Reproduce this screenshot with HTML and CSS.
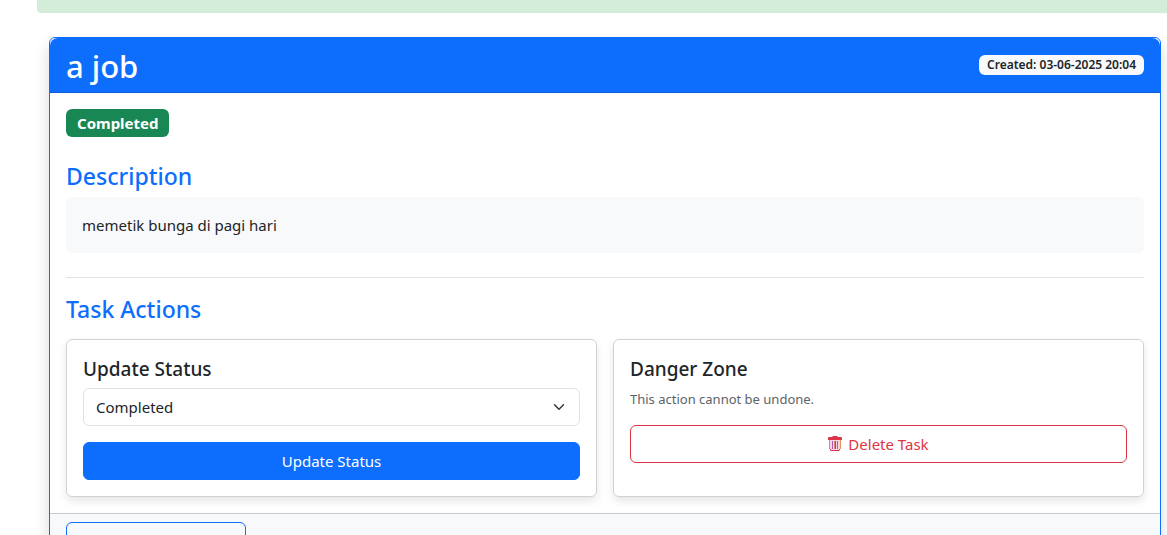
FILE: index.html
```html
<!DOCTYPE html>
<html lang="en">
<head>
<meta charset="utf-8">
<meta name="viewport" content="width=device-width, initial-scale=1">
<title>a job</title>
<link rel="stylesheet" href="styles.css">
</head>
<body>
<div class="alert"></div>
<main class="task">
  <header class="task-header">
    <h1 class="task-title">a job</h1>
    <span class="badge badge-created">Created: 03-06-2025 20:04</span>
  </header>
  <div class="task-body">
    <span class="badge badge-status">Completed</span>
    <h2 class="section-title">Description</h2>
    <p class="description">memetik bunga di pagi hari</p>
    <hr class="divider">
    <h2 class="section-title actions-title">Task Actions</h2>
    <div class="actions">
      <form class="panel">
        <h3 class="panel-title"><label for="status">Update Status</label></h3>
        <select class="select" id="status" name="status">
          <option selected>Completed</option>
        </select>
        <button class="btn btn-primary" type="button">Update Status</button>
      </form>
      <section class="panel">
        <h3 class="panel-title">Danger Zone</h3>
        <p class="note">This action cannot be undone.</p>
        <button class="btn btn-danger" type="button">
          <svg class="icon" viewBox="0 0 14 16" aria-hidden="true"><path fill="#dc3545" d="M5 0h4l1 1h3q1 0 1 1v2H0V2q0-1 1-1h3z"/><path fill="#f3d3ea" d="M2 4h10v10H2z"/><path fill="#e58a62" d="M1 4h1v9H1zM6 5h1v8H6z"/><path fill="#b45bb8" d="M4 5h1v8H4zM9 5h1v8H9z"/><path fill="#dc3545" d="M7 5h1v8H7z"/><path fill="#e8935c" d="M12 4h1v9h-1z"/><path fill="#dc3545" d="M2 13h1v1h8v-1h1v1l-1 1H3l-1-1z"/></svg>
          Delete Task
        </button>
      </section>
    </div>
  </div>
  <footer class="task-footer">
    <a class="btn btn-outline" href="#"></a>
  </footer>
</main>
</body>
</html>
```

FILE: styles.css
```css
* {
  box-sizing: border-box;
}

body {
  margin: 0;
  height: 100vh;
  overflow: hidden;
  background: #fff;
  color: #212529;
  font-family: "Segoe UI", "Noto Sans", "Open Sans", sans-serif;
  font-size: 15px;
  line-height: 24px;
}

h1, h2, h3, p {
  margin: 0;
  font-weight: 500;
}

.alert {
  height: 13px;
  margin-left: 37px;
  border-bottom-left-radius: 4px;
  background: #d4edda;
}

.task {
  margin: 24px 6px 24px 49px;
  border: 1px solid #0d6efd;
  border-radius: 6px;
  background: #fff;
  box-shadow: 0 8px 16px rgba(0, 0, 0, 0.15);
}

.task-header {
  display: flex;
  align-items: center;
  justify-content: space-between;
  padding: 8px 16px;
  border-bottom: 1px solid #0b5ed7;
  border-radius: 8px 8px 0 0;
  background: #0d6efd;
  color: #fff;
}

.task-title {
  padding-top: 2px;
  font-size: 31px;
  line-height: 36px;
}

.badge {
  display: block;
  border-radius: 6px;
  font-weight: 700;
}

.badge-created {
  padding: 0 8px;
  background: #f8f9fa;
  color: #212529;
  font-size: 12px;
  font-weight: 600;
  line-height: 20px;
}

.badge-status {
  width: fit-content;
  margin-bottom: 24px;
  padding: 0 11px;
  background: #198754;
  color: #fff;
  line-height: 28px;
}

.task-body {
  padding: 16px;
}

.section-title {
  margin-bottom: 6px;
  color: #0d6efd;
  font-size: 23px;
  line-height: 30px;
}

.actions-title {
  margin-bottom: 15px;
}

.description {
  padding: 16px;
  border-radius: 6px;
  background: #f8f9fa;
  font-weight: 400;
}

.divider {
  margin: 24px 0 16px;
  border: 0;
  border-top: 1px solid #dee2e6;
}

.actions {
  display: grid;
  grid-template-columns: 1fr 1fr;
  gap: 16px;
}

.panel {
  padding: 16px;
  border: 1px solid #d0d1d2;
  border-radius: 6px;
  box-shadow: 0 4px 8px rgba(0, 0, 0, 0.1);
}

.panel-title {
  margin-bottom: 6px;
  font-size: 19px;
  line-height: 26px;
}

.select {
  display: block;
  width: 100%;
  height: 38px;
  margin-bottom: 16px;
  padding: 0 12px;
  border: 1px solid #dee2e6;
  border-radius: 6px;
  appearance: none;
  background: #fff url("data:image/svg+xml,%3Csvg xmlns='http://www.w3.org/2000/svg' viewBox='0 0 16 16'%3E%3Cpath fill='none' stroke='%23343a40' stroke-linecap='round' stroke-linejoin='round' stroke-width='2' d='m2 5 6 6 6-6'/%3E%3C/svg%3E") no-repeat right 12px center / 16px 12px;
  color: inherit;
  font: inherit;
}

.note {
  margin-bottom: 15px;
  color: #5c636a;
  font-size: 13px;
  font-weight: 400;
  line-height: 22px;
}

.btn {
  display: flex;
  align-items: center;
  justify-content: center;
  gap: 6px;
  width: 100%;
  height: 38px;
  border: 1px solid;
  border-radius: 6px;
  background: transparent;
  font: inherit;
}

.btn-primary {
  border-color: #0d6efd;
  background: #0d6efd;
  color: #fff;
}

.btn-danger {
  border-color: #dc3545;
  color: #dc3545;
}

.btn-outline {
  width: 180px;
  border-color: #0d6efd;
  color: #0d6efd;
}

.icon {
  width: 14px;
  height: 16px;
}

.task-footer {
  padding: 8px 16px;
  border-top: 1px solid #c9cbcd;
  border-radius: 0 0 5px 5px;
  background: #f8f9fa;
}
```
